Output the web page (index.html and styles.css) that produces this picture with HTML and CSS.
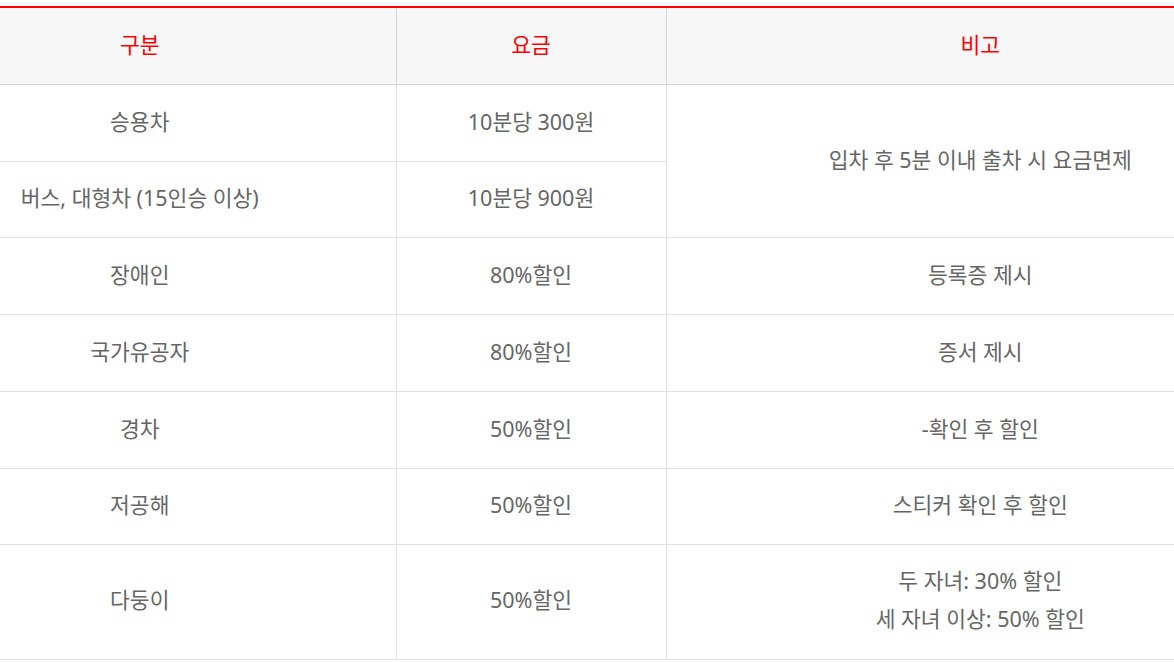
FILE: index.html
```html
<!DOCTYPE html>
<html lang="ko">
<head>
<meta charset="utf-8">
<title>요금표</title>
<link rel="stylesheet" href="styles.css">
</head>
<body>
<div class="viewport">
<table class="fee-table">
  <colgroup>
    <col class="col-kind">
    <col class="col-fee">
    <col class="col-note">
  </colgroup>
  <thead>
    <tr>
      <th>구분</th>
      <th>요금</th>
      <th>비고</th>
    </tr>
  </thead>
  <tbody>
    <tr>
      <td>승용차</td>
      <td>10분당 300원</td>
      <td rowspan="2">입차 후 5분 이내 출차 시 요금면제</td>
    </tr>
    <tr class="short">
      <td>버스, 대형차 (15인승 이상)</td>
      <td>10분당 900원</td>
    </tr>
    <tr>
      <td>장애인</td>
      <td>80%할인</td>
      <td>등록증 제시</td>
    </tr>
    <tr>
      <td>국가유공자</td>
      <td>80%할인</td>
      <td>증서 제시</td>
    </tr>
    <tr>
      <td>경차</td>
      <td>50%할인</td>
      <td>-확인 후 할인</td>
    </tr>
    <tr class="short">
      <td>저공해</td>
      <td>50%할인</td>
      <td>스티커 확인 후 할인</td>
    </tr>
    <tr class="multi">
      <td>다둥이</td>
      <td>50%할인</td>
      <td>두 자녀: 30% 할인<br>세 자녀 이상: 50% 할인</td>
    </tr>
  </tbody>
</table>
</div>
</body>
</html>
```
FILE: styles.css
```css
html, body {
  margin: 0;
  padding: 0;
  background: #ffffff;
  overflow: hidden;
}

body {
  font-family: "Noto Sans", "Noto Sans CJK KR", sans-serif;
}

.viewport {
  width: 1174px;
  padding-top: 6px;
  overflow: hidden;
}

.fee-table {
  width: 1410px;
  margin-left: -116px;
  border-collapse: collapse;
  table-layout: fixed;
  border-top: 2px solid #ff0000;
  font-size: 21.5px;
  color: #666666;
}

.col-kind { width: 512px; }
.col-fee { width: 270px; }
.col-note { width: 628px; }

.fee-table th,
.fee-table td {
  text-align: center;
  vertical-align: middle;
  padding: 0 15px 3px;
  line-height: 38px;
  border: 1px solid #e2e2e2;
}

.fee-table th {
  height: 73px;
  background: #f7f7f7;
  color: #ff0000;
  font-weight: 400;
  border-color: #d6d6d6;
  border-top: none;
}

.fee-table td {
  height: 73px;
}

.fee-table tr.short td { height: 72px; }

.fee-table tr > :first-child { border-left: none; }
.fee-table tr > :last-child { border-right: none; }
.fee-table tr.multi td { height: auto; padding-top: 17px; padding-bottom: 21px; }
```
